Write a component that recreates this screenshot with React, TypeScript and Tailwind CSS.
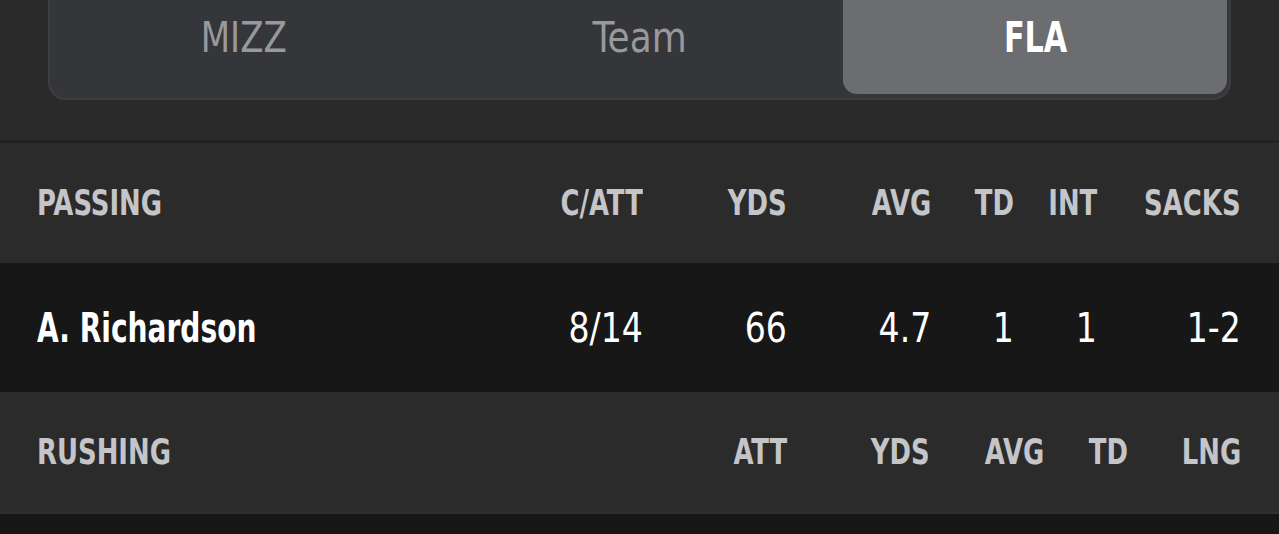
const font = { fontFamily: '"DejaVu Sans Condensed", "DejaVu Sans", sans-serif' };

function HeaderRow({ label, cols }: { label: string; cols: { t: string; w: string }[] }) {
  return (
    <div className="flex h-[120px] items-center bg-[#2b2b2b] pl-[37px] pr-[38px] text-[36px] font-bold text-[#c4c5c9]">
      <div className="flex-1">
        <span className="inline-block origin-left scale-x-[0.8]">{label}</span>
      </div>
      {cols.map((c) => (
        <div key={c.t} className={`${c.w} text-right`}>
          <span className="inline-block origin-right scale-x-[0.8]">{c.t}</span>
        </div>
      ))}
    </div>
  );
}

function Val({ v, w }: { v: string; w: string }) {
  return (
    <div className={`${w} text-right`}>
      <span className="inline-block origin-right scale-x-[0.92]">{v}</span>
    </div>
  );
}

export default function App() {
  return (
    <div className="h-[534px] w-[1279px] overflow-hidden bg-[#171717]" style={font}>
      {/* Team switcher */}
      <div className="flex h-[140px] flex-col bg-[#2a2a2a] px-[48px]">
        <div className="-mt-[24px] flex h-[124px] gap-[12px] rounded-b-[18px] border-2 border-[#3d3e42] bg-[#35363a] p-[2px] pb-[4px]">
          <div className="flex flex-1 items-center justify-center text-[42px] text-[#98999d]">
            <span className="inline-block scale-x-[0.9]">MIZZ</span>
          </div>
          <div className="flex flex-1 items-center justify-center text-[42px] text-[#98999d]">
            <span className="inline-block scale-x-[0.95]">Team</span>
          </div>
          <div className="flex flex-1 items-center justify-center rounded-[14px] bg-[#6c6d71] text-[42px] font-bold text-white">
            <span className="inline-block scale-x-[0.8]">FLA</span>
          </div>
        </div>
      </div>
      <div className="h-[3px] bg-[#222222]" />

      <HeaderRow
        label="PASSING"
        cols={[
          { t: "C/ATT", w: "w-[144px]" },
          { t: "YDS", w: "w-[144px]" },
          { t: "AVG", w: "w-[144px]" },
          { t: "TD", w: "w-[83px]" },
          { t: "INT", w: "w-[83px]" },
          { t: "SACKS", w: "w-[144px]" },
        ]}
      />

      <div className="flex h-[129px] items-center bg-[#171717] pl-[37px] pr-[38px] text-[40px] text-white">
        <div className="flex-1 font-bold">
          <span className="inline-block origin-left scale-x-[0.78]">A. Richardson</span>
        </div>
        <Val v="8/14" w="w-[144px]" />
        <Val v="66" w="w-[144px]" />
        <Val v="4.7" w="w-[144px]" />
        <Val v="1" w="w-[83px]" />
        <Val v="1" w="w-[83px]" />
        <Val v="1-2" w="w-[144px]" />
      </div>

      <HeaderRow
        label="RUSHING"
        cols={[
          { t: "ATT", w: "w-[144px]" },
          { t: "YDS", w: "w-[143px]" },
          { t: "AVG", w: "w-[114px]" },
          { t: "TD", w: "w-[84px]" },
          { t: "LNG", w: "w-[113px]" },
        ]}
      />
      <div className="h-[2px] bg-[#303030]" />
      <div className="h-[40px] bg-[#171717]" />
    </div>
  );
}
